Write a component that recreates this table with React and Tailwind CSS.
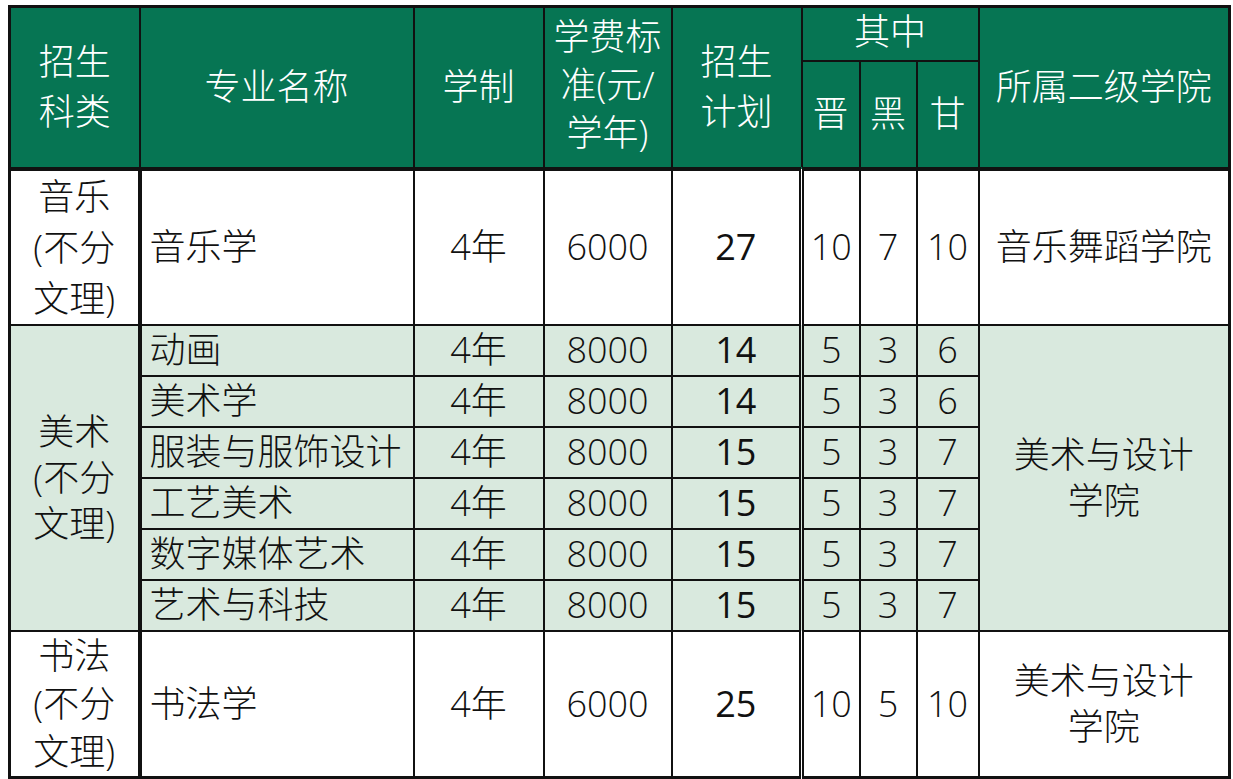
import React from "react";

const artRows = [
  { name: "动画", plan: 14, jin: 5, hei: 3, gan: 6 },
  { name: "美术学", plan: 14, jin: 5, hei: 3, gan: 6 },
  { name: "服装与服饰设计", plan: 15, jin: 5, hei: 3, gan: 7 },
  { name: "工艺美术", plan: 15, jin: 5, hei: 3, gan: 7 },
  { name: "数字媒体艺术", plan: 15, jin: 5, hei: 3, gan: 7 },
  { name: "艺术与科技", plan: 15, jin: 5, hei: 3, gan: 7 },
];

const th = "border-2 border-[#111] font-light text-white text-center align-middle p-0";
const td = "border-2 border-[#111] text-center align-middle p-0";

const App = () => {
  return (
    <div className="min-h-screen bg-white pt-[5px] pl-[8px] font-['Open_Sans','Noto_Sans_CJK_SC',sans-serif] text-[36px] font-light text-[#111]">
      <table className="table-fixed border-collapse w-[1220px] border-[3px] border-[#111]">
        <colgroup>
          <col className="w-[130px]" />
          <col className="w-[274px]" />
          <col className="w-[130px]" />
          <col className="w-[128px]" />
          <col className="w-[130px]" />
          <col className="w-[58px]" />
          <col className="w-[57px]" />
          <col className="w-[62px]" />
          <col className="w-[251px]" />
        </colgroup>
        <thead className="bg-[#067553] border-b-4 border-[#111]">
          <tr className="h-[54px]">
            <th rowSpan={2} className={`${th} leading-[50px]`}>
              招生
              <br />
              科类
            </th>
            <th rowSpan={2} className={th}>
              专业名称
            </th>
            <th rowSpan={2} className={th}>
              学制
            </th>
            <th rowSpan={2} className={`${th} leading-[48px] pb-1`}>
              学费标
              <br />
              准(元/
              <br />
              学年)
            </th>
            <th rowSpan={2} className={`${th} leading-[50px]`}>
              招生
              <br />
              计划
            </th>
            <th colSpan={3} className={`${th} leading-[40px] pb-1`}>
              其中
            </th>
            <th rowSpan={2} className={th}>
              所属二级学院
            </th>
          </tr>
          <tr className="h-[108px]">
            <th className={th}>晋</th>
            <th className={th}>黑</th>
            <th className={th}>甘</th>
          </tr>
        </thead>
        <tbody>
          <tr className="h-[155px] bg-white">
            <td className={`${td} border-r-4 leading-[51px]`}>
              音乐
              <br />
              (不分
              <br />
              文理)
            </td>
            <td className={`${td} text-left pl-2`}>音乐学</td>
            <td className={td}>4年</td>
            <td className={td}>6000</td>
            <td className={`${td} border-r-[5px] border-double font-medium`}>27</td>
            <td className={td}>10</td>
            <td className={td}>7</td>
            <td className={td}>10</td>
            <td className={td}>音乐舞蹈学院</td>
          </tr>
          {artRows.map((r, i) => (
            <tr key={r.name} className="h-[51px] bg-[#d9e9de] leading-[44px]">
              {i === 0 && (
                <td rowSpan={6} className={`${td} border-r-4 leading-[46px]`}>
                  美术
                  <br />
                  (不分
                  <br />
                  文理)
                </td>
              )}
              <td className={`${td} text-left pl-2`}>{r.name}</td>
              <td className={td}>4年</td>
              <td className={td}>8000</td>
              <td className={`${td} border-r-[5px] border-double font-medium`}>{r.plan}</td>
              <td className={td}>{r.jin}</td>
              <td className={td}>{r.hei}</td>
              <td className={td}>{r.gan}</td>
              {i === 0 && (
                <td rowSpan={6} className={`${td} leading-[46px]`}>
                  美术与设计
                  <br />
                  学院
                </td>
              )}
            </tr>
          ))}
          <tr className="h-[145px] bg-white">
            <td className={`${td} border-r-4 leading-[48px]`}>
              书法
              <br />
              (不分
              <br />
              文理)
            </td>
            <td className={`${td} text-left pl-2`}>书法学</td>
            <td className={td}>4年</td>
            <td className={td}>6000</td>
            <td className={`${td} border-r-[5px] border-double font-medium`}>25</td>
            <td className={td}>10</td>
            <td className={td}>5</td>
            <td className={td}>10</td>
            <td className={`${td} leading-[46px]`}>
              美术与设计
              <br />
              学院
            </td>
          </tr>
        </tbody>
      </table>
    </div>
  );
};

export default App;
